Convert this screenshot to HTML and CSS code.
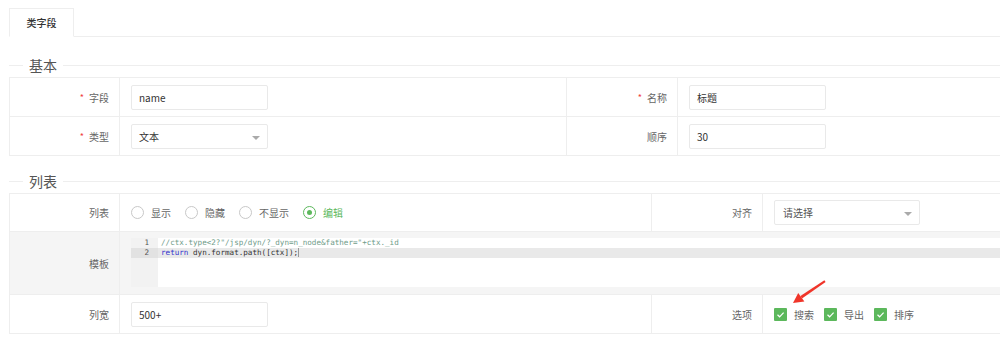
FILE: index.html
```html
<!DOCTYPE html>
<html lang="zh-CN">
<head>
<meta charset="utf-8">
<title>类字段</title>
<link rel="stylesheet" href="styles.css">
</head>
<body>
<div class="page">
  <div class="tabs">
    <div class="tab">类字段</div>
  </div>

  <div class="section-title first"><span class="lead"></span><span class="title-text">基本</span><span class="rest"></span></div>
  <div class="grid grid-basic">
    <div class="cell label"><span class="req">*</span>字段</div>
    <div class="cell value"><div class="input">name</div></div>
    <div class="cell label"><span class="req">*</span>名称</div>
    <div class="cell value"><div class="input">标题</div></div>

    <div class="cell label"><span class="req">*</span>类型</div>
    <div class="cell value"><div class="input select">文本<span class="caret"></span></div></div>
    <div class="cell label">顺序</div>
    <div class="cell value"><div class="input">30</div></div>
  </div>

  <div class="section-title second"><span class="lead"></span><span class="title-text">列表</span><span class="rest"></span></div>
  <div class="grid grid-list">
    <div class="cell label">列表</div>
    <div class="cell value">
      <div class="radios">
        <span class="radio"><span class="circle"></span>显示</span>
        <span class="radio"><span class="circle"></span>隐藏</span>
        <span class="radio"><span class="circle"></span>不显示</span>
        <span class="radio checked"><span class="circle"></span>编辑</span>
      </div>
    </div>
    <div class="cell label">对齐</div>
    <div class="cell value"><div class="input select wide placeholder">请选择<span class="caret"></span></div></div>

    <div class="cell label gray">模板</div>
    <div class="cell value gray span3">
      <div class="editor">
        <div class="gutter">
          <div class="ln">1</div>
          <div class="ln active">2</div>
        </div>
        <div class="code">
          <div class="line"><span class="c-comment">//ctx.type&lt;2?"/jsp/dyn/?_dyn=n_node&amp;father="+ctx._id</span></div>
          <div class="line active"><span class="c-kw">return</span> dyn.format.path([ctx]);<span class="cursor"></span></div>
        </div>
      </div>
    </div>

    <div class="cell label">列宽</div>
    <div class="cell value"><div class="input">500+</div></div>
    <div class="cell label">选项</div>
    <div class="cell value">
      <div class="checks">
        <span class="check"><span class="box"><svg viewBox="0 0 13 13" width="13" height="13"><path d="M3.5 6.8 L5.6 8.8 L9.6 4.6" fill="none" stroke="#fff" stroke-width="1.2"/></svg></span>搜索</span>
        <span class="check"><span class="box"><svg viewBox="0 0 13 13" width="13" height="13"><path d="M3.5 6.8 L5.6 8.8 L9.6 4.6" fill="none" stroke="#fff" stroke-width="1.2"/></svg></span>导出</span>
        <span class="check"><span class="box"><svg viewBox="0 0 13 13" width="13" height="13"><path d="M3.5 6.8 L5.6 8.8 L9.6 4.6" fill="none" stroke="#fff" stroke-width="1.2"/></svg></span>排序</span>
      </div>
    </div>
  </div>

  <svg class="annot" width="1000" height="340" viewBox="0 0 1000 340">
    <polygon points="825.6,282 824.4,280.2 800.4,296.0 802.0,298.6" fill="#f0352a"/>
    <polygon points="793,303 798.2,293.0 804.4,301.6" fill="#f0352a"/>
  </svg>
</div>
</body>
</html>
```
FILE: styles.css
```css
html, body {
  margin: 0;
  padding: 0;
  overflow: hidden;
  background: #fff;
}

body {
  font-family: "Noto Sans CJK SC", "Noto Sans", sans-serif;
  font-size: 10px;
  color: #666;
}

.page {
  position: relative;
  width: 1040px;
  padding-left: 9px;
  padding-top: 8px;
  height: 340px;
  box-sizing: border-box;
}

.tabs {
  display: flex;
  height: 29px;
  box-sizing: border-box;
  border-bottom: 1px solid #eeeeee;
}

.tab {
  width: 65px;
  height: 29px;
  box-sizing: border-box;
  border: 1px solid #eeeeee;
  border-bottom-color: #fff;
  background: #fff;
  display: flex;
  align-items: center;
  justify-content: center;
  color: #333;
  font-weight: 500;
  font-size: 10px;
  line-height: 1;
}

.section-title {
  display: flex;
  align-items: center;
  height: 24px;
}

.section-title.first { margin-top: 16px; }
.section-title.second { margin-top: 13px; }

.section-title .lead {
  width: 14px;
  height: 1px;
  background: #eeeeee;
}

.section-title .title-text {
  padding: 0 6px;
  font-size: 14px;
  color: #555;
  line-height: 1;
}

.section-title .rest {
  flex: 1;
  height: 1px;
  background: #eeeeee;
}

.grid {
  display: grid;
  border-top: 1px solid #eeeeee;
  border-left: 1px solid #eeeeee;
}

.grid-basic {
  grid-template-columns: 110px 447px 111px 1fr;
  grid-auto-rows: 39px;
}

.grid-list {
  grid-template-columns: 110px 532px 111px 1fr;
  grid-template-rows: 38px 63px 39px;
}

.cell {
  border-right: 1px solid #eeeeee;
  border-bottom: 1px solid #eeeeee;
  display: flex;
  align-items: center;
  min-width: 0;
}

.cell.label {
  justify-content: flex-end;
  padding-right: 10px;
  color: #666;
}

.cell.value {
  padding-left: 11px;
}

.cell.gray {
  background: #f5f5f5;
}

.span3 {
  grid-column: span 3;
  align-items: flex-start;
  padding-top: 6px;
}

.req {
  color: #f04040;
  margin-right: 5px;
  font-size: 9px;
}

.input {
  width: 137px;
  height: 25px;
  box-sizing: border-box;
  border: 1px solid #e9e9e9;
  border-radius: 2px;
  padding-left: 7px;
  display: flex;
  align-items: center;
  color: #333;
  position: relative;
  font-size: 10px;
}

.input.wide {
  width: 146px;
}

.input.placeholder {
  color: #555;
  padding-left: 8px;
}

.caret {
  position: absolute;
  right: 7px;
  top: 11px;
  width: 0;
  height: 0;
  border-left: 4.5px solid transparent;
  border-right: 4.5px solid transparent;
  border-top: 4px solid #aaaaaa;
}

.radios {
  display: flex;
  align-items: center;
}

.radio {
  display: flex;
  align-items: center;
  margin-right: 14px;
  color: #666;
}

.radio .circle {
  width: 13px;
  height: 13px;
  box-sizing: border-box;
  border: 1px solid #c8c8c8;
  border-radius: 50%;
  margin-right: 7px;
  background: #fff;
  position: relative;
}

.radio.checked {
  color: #5cb85c;
}

.radio.checked .circle {
  border-color: #5cb85c;
}

.radio.checked .circle::after {
  content: "";
  position: absolute;
  left: 3px;
  top: 3px;
  width: 5px;
  height: 5px;
  border-radius: 50%;
  background: #5cb85c;
}

.editor {
  display: flex;
  width: 100%;
  height: 49px;
  background: #fff;
  font-family: "DejaVu Sans Mono", "Liberation Mono", monospace;
  font-size: 7.6px;
}

.gutter {
  width: 27px;
  background: #f2f2f2;
  color: #555;
  flex: none;
}

.gutter .ln {
  height: 10px;
  line-height: 10px;
  text-align: right;
  padding-right: 9px;
}

.gutter .ln.active {
  background: #e2e2e2;
}

.code {
  flex: 1;
}

.code .line {
  height: 10px;
  line-height: 10px;
  padding-left: 3px;
  color: #333;
  white-space: pre;
}

.code .line.active {
  background: #e9e9e9;
}

.c-comment {
  color: #6f9c8a;
}

.c-kw {
  color: #3333cc;
}

.cursor {
  display: inline-block;
  width: 1px;
  height: 9px;
  background: #999;
  vertical-align: middle;
}

.checks {
  display: flex;
  align-items: center;
}

.check {
  display: flex;
  align-items: center;
  margin-right: 10px;
  color: #666;
}

.check .box {
  width: 13px;
  height: 13px;
  background: #5cb85c;
  border-radius: 1px;
  margin-right: 7px;
  display: block;
}

.check .box svg {
  display: block;
}

.annot {
  position: absolute;
  left: 0;
  top: 0;
  pointer-events: none;
}
```
